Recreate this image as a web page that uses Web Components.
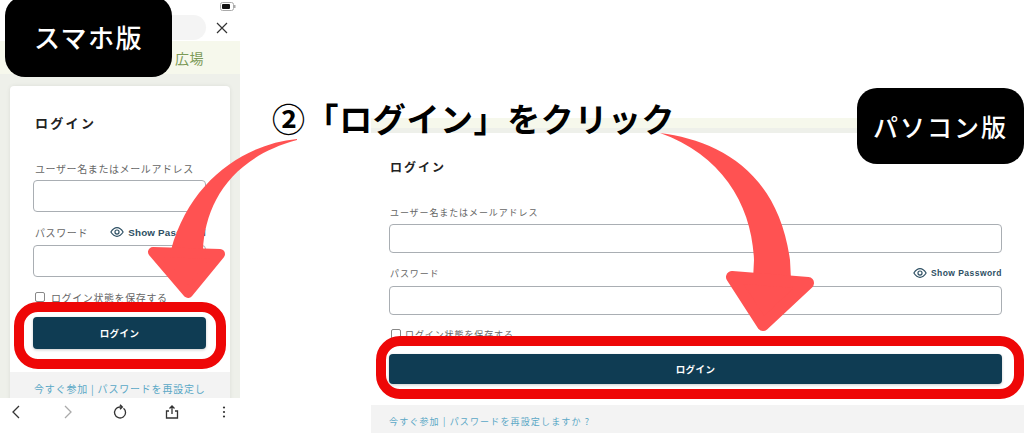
<!DOCTYPE html>
<html lang="ja">
<head>
<meta charset="utf-8">
<title>ログイン</title>
<style>
html, body { margin: 0; padding: 0; background: #fff; }
body { width: 1024px; height: 433px; overflow: hidden; position: relative; font-family: "Noto Sans CJK JP", "Noto Sans", sans-serif; }
.shots { display: flex; height: 433px; }
</style>
</head>
<body>
<div class="shots">
  <phone-shot>
    <login-form compact></login-form>
  </phone-shot>
  <desktop-shot>
    <login-form></login-form>
  </desktop-shot>
</div>

<focus-ring style="left:14px;top:302px;width:212px;height:67px"></focus-ring>
<focus-ring style="left:376px;top:336px;width:648px;height:63px"></focus-ring>
<swoop-arrows></swoop-arrows>
<black-badge style="left:5px;top:-4px;width:167px;height:81px;font-size:26px;letter-spacing:1.5px">スマホ版</black-badge>
<black-badge style="left:857px;top:88px;width:167px;height:76px;font-size:25px;letter-spacing:2px;padding-bottom:1px">パソコン版</black-badge>
<step-title>②「ログイン」をクリック</step-title>

<script>
const formTemplate = document.createElement('template');
formTemplate.innerHTML = `
<style>
:host {
    display: block;
    --pad-l: 18px;
    --pad-r: 22px;
    --pad-t: 23px;
    --title: 12px;
    --title-track: 2px;
    --title-gap: 26px;
    --label: 9px;
    --track: .9px;
    --foot-track: 1.15px;
    --foot-l: 18px;
    --foot-r: 22px;
    --input-h: 29px;
    --check-gap: 11px;
    --check-text: 4px;
    --btn-h: 30px;
    --foot-gap: 21px;
    --show: 8.5px;
    --show-track: .45px;
    --eye: 14px;
    --row-pad: 1px;
    background: #fff;
    color: #555;
}
:host([compact]) {
    --pad-l: 23px;
    --pad-r: 24px;
    --pad-t: 26px;
    --title: 13px;
    --title-track: 2.300px;
    --label: 10px;
    --track: .6px;
    --foot-track: .8px;
    --foot-l: 24px;
    --foot-r: 18px;
    --input-h: 32px;
    --check-gap: 12px;
    --check-text: 6px;
    --btn-h: 32px;
    --foot-gap: 23px;
    --show: 9.800px;
    --show-track: .2px;
    --row-pad: 2px;
    border-radius: 4px;
    box-shadow: 0 0 4px rgba(0,0,0,.08);
}
.body { padding: var(--pad-t) var(--pad-r) 0 var(--pad-l); }
h2 {
    margin: 0 0 var(--title-gap) var(--row-pad);
    font-size: var(--title);
    line-height: 22px;
    letter-spacing: var(--title-track);
    color: #222;
    font-weight: 700;
}
.row {
    display: flex;
    justify-content: space-between;
    align-items: center;
    height: 16px;
    font-size: var(--label);
    letter-spacing: var(--track);
    color: #666;
    padding-left: var(--row-pad);
    white-space: nowrap;
}
.field {
    height: var(--input-h);
    box-sizing: border-box;
    border: 1px solid #a9aeb3;
    border-radius: 4px;
    background: #fff;
    margin: 4px 0 12px;
}
.row.pw + .field { margin: 5px 0 0; }
.show {
    display: flex;
    align-items: center;
    gap: 4px;
    font: 700 var(--show) "Liberation Sans", Arial, sans-serif;
    color: #2d4f63;
    letter-spacing: var(--show-track);
}
.show svg { width: var(--eye); height: var(--eye); }
.check { margin-top: var(--check-gap); gap: var(--check-text); justify-content: flex-start; padding-left: 2px; }
.check i {
    width: 8px;
    height: 8px;
    border: 1px solid #888;
    border-radius: 2px;
    flex: none;
}
button {
    display: block;
    width: 100%;
    height: var(--btn-h);
    margin-top: 12px;
    border: 0;
    border-radius: 4px;
    background: #0f3c53;
    color: #fff;
    font: 700 9.500px "Noto Sans CJK JP", sans-serif;
    letter-spacing: .4px;
    box-shadow: 0 1px 3px rgba(0,0,0,.2);
}
.foot {
    margin-top: var(--foot-gap);
    padding: 8px var(--foot-r) 40px var(--foot-l);
    background: #f3f3f3;
    font-size: var(--label);
    line-height: 18px;
    letter-spacing: var(--foot-track);
    color: #5aa8c6;
}
</style>
<div class="body">
    <h2>ログイン</h2>
    <div class="row">ユーザー名またはメールアドレス</div>
    <div class="field"></div>
    <div class="row pw">
        <span>パスワード</span>
        <span class="show">
            <svg viewBox="0 0 24 24" fill="none" stroke="#2d4f63" stroke-width="2"><path d="M1.5 12C5 6.500 8.500 4.500 12 4.500S19 6.500 22.500 12C19 17.500 15.500 19.500 12 19.500S5 17.500 1.500 12Z"/><circle cx="12" cy="12" r="3.500"/></svg>
            Show Password
        </span>
    </div>
    <div class="field"></div>
    <div class="row check"><i></i><span>ログイン状態を保存する</span></div>
    <button type="button">ログイン</button>
</div>
<div class="foot">今すぐ参加 | パスワードを再設定しますか ?</div>
`;

class LoginForm extends HTMLElement {
    constructor() {
        super();
        this.attachShadow({mode: 'open'});
        this.shadowRoot.appendChild(formTemplate.content.cloneNode(true));
    }
}

const phoneTemplate = document.createElement('template');
phoneTemplate.innerHTML = `
<style>
:host {
    display: flex;
    flex-direction: column;
    width: 240px;
    height: 433px;
    flex: none;
    background: #fff;
    overflow: hidden;
}
.status { height: 14px; display: flex; justify-content: flex-end; align-items: center; padding: 0 4px 2px 0; box-sizing: border-box; }
.status svg { display: block; }
.address { height: 27px; display: flex; align-items: center; padding-left: 6px; gap: 9px; }
.pill { width: 200px; height: 25px; border-radius: 13px; background: #f4f4f4; }
.brand {
    height: 33px;
    background: #f6f8ec;
    box-sizing: border-box;
    padding-right: 36px;
    display: flex;
    align-items: center;
    justify-content: flex-end;
    font-size: 14px;
    letter-spacing: .5px;
    color: #7b9a57;
}
.page { flex: 1; min-height: 0; overflow: hidden; background: #eef0ea; padding: 12px 10px 0; }
nav {
    height: 35px;
    box-sizing: border-box;
    background: #fff;
    display: flex;
    justify-content: space-between;
    align-items: center;
    padding: 0 6px 7px;
}
nav svg { width: 20px; height: 20px; display: block; fill: none; stroke: #333; stroke-width: 1.300; }
</style>
<div class="status">
    <svg width="16" height="9" viewBox="0 0 16 9"><rect x=".5" y=".5" width="13" height="8" rx="2" fill="none" stroke="#aaa"/><rect x="2" y="2" width="8" height="5" rx="1" fill="#111"/><rect x="14" y="3" width="1.500" height="3" fill="#aaa"/></svg>
</div>
<div class="address">
    <div class="pill"></div>
    <svg width="14" height="14" viewBox="0 0 14 14" stroke="#333" stroke-width="1.200"><path d="M2 2L12 12M12 2L2 12"/></svg>
</div>
<div class="brand">広場</div>
<div class="page"><slot></slot></div>
<nav>
    <svg viewBox="0 0 20 20"><path d="M13 4L7 10L13 16"/></svg>
    <svg viewBox="0 0 20 20" style="stroke:#aaa"><path d="M7 4L13 10L7 16"/></svg>
    <svg viewBox="0 0 20 20"><path d="M13.500 6.200A5.500 5.500 0 1 1 9.800 5H11.500"/><path d="M10 2.800L12.200 5L10 7.200" stroke-width="1.500"/></svg>
    <svg viewBox="0 0 20 20"><path d="M10 12V4M7.500 6.500L10 4L12.500 6.500M7 9H4.500V16H15.500V9H13"/></svg>
    <svg viewBox="0 0 20 20" style="fill:#333;stroke:none"><circle cx="10" cy="5.500" r="1.100"/><circle cx="10" cy="10" r="1.100"/><circle cx="10" cy="14.500" r="1.100"/></svg>
</nav>
`;

class PhoneShot extends HTMLElement {
    constructor() {
        super();
        this.attachShadow({mode: 'open'});
        this.shadowRoot.appendChild(phoneTemplate.content.cloneNode(true));
    }
}

const desktopTemplate = document.createElement('template');
desktopTemplate.innerHTML = `
<style>
:host {
    display: block;
    flex: none;
    width: 653px;
    height: 433px;
    margin-left: 131px;
    padding-top: 118px;
    box-sizing: border-box;
    overflow: hidden;
}
.brand { height: 10px; background: #f6f8ec; }
.page { height: 5px; background: #eef0ea; }
</style>
<div class="brand"></div>
<div class="page"></div>
<slot></slot>
`;

class DesktopShot extends HTMLElement {
    constructor() {
        super();
        this.attachShadow({mode: 'open'});
        this.shadowRoot.appendChild(desktopTemplate.content.cloneNode(true));
    }
}

class FocusRing extends HTMLElement {
    constructor() {
        super();
        this.attachShadow({mode: 'open'}).innerHTML = `
<style>
:host {
    display: block;
    position: absolute;
    box-sizing: border-box;
    border: 10px solid #ee0707;
    border-radius: 24px;
}
</style>`;
    }
}

class BlackBadge extends HTMLElement {
    constructor() {
        super();
        this.attachShadow({mode: 'open'}).innerHTML = `
<style>
:host {
    display: flex;
    position: absolute;
    box-sizing: border-box;
    align-items: center;
    justify-content: center;
    background: #000;
    color: #fff;
    border-radius: 20px;
    font-family: "Noto Sans CJK JP", sans-serif;
    font-weight: 500;
    white-space: nowrap;
}
</style>
<slot></slot>`;
    }
}

class StepTitle extends HTMLElement {
    constructor() {
        super();
        this.attachShadow({mode: 'open'}).innerHTML = `
<style>
:host {
    display: block;
    position: absolute;
    left: 272px;
    top: 94px;
    font: 700 33px/48px "Noto Sans CJK JP", sans-serif;
    letter-spacing: .6px;
    color: #000;
    white-space: nowrap;
}
</style>
<slot></slot>`;
    }
}

class SwoopArrows extends HTMLElement {
    constructor() {
        super();
        this.attachShadow({mode: 'open'}).innerHTML = `
<style>
:host { display: block; position: absolute; left: 0; top: 0; pointer-events: none; }
svg { display: block; }
</style>
<svg width="1024" height="433" viewBox="0 0 1024 433" fill="#ff5252" stroke="none">
    <path d="M297 139C245 144 190 180 171 250H203C205 205 230 158 297 140Z"/>
    <path d="M153 252L220 254L188 293Z" stroke="#ff5252" stroke-width="10" stroke-linejoin="round"/>
    <path d="M660 133C716 140 778 170 790 260L791 280H753L754 260C752 205 722 155 660 133Z"/>
    <path d="M732 277L808 283L763 325Z" stroke="#ff5252" stroke-width="12" stroke-linejoin="round"/>
</svg>`;
    }
}

window.customElements.define('login-form', LoginForm);
window.customElements.define('phone-shot', PhoneShot);
window.customElements.define('desktop-shot', DesktopShot);
window.customElements.define('focus-ring', FocusRing);
window.customElements.define('black-badge', BlackBadge);
window.customElements.define('step-title', StepTitle);
window.customElements.define('swoop-arrows', SwoopArrows);
</script>
</body>
</html>
